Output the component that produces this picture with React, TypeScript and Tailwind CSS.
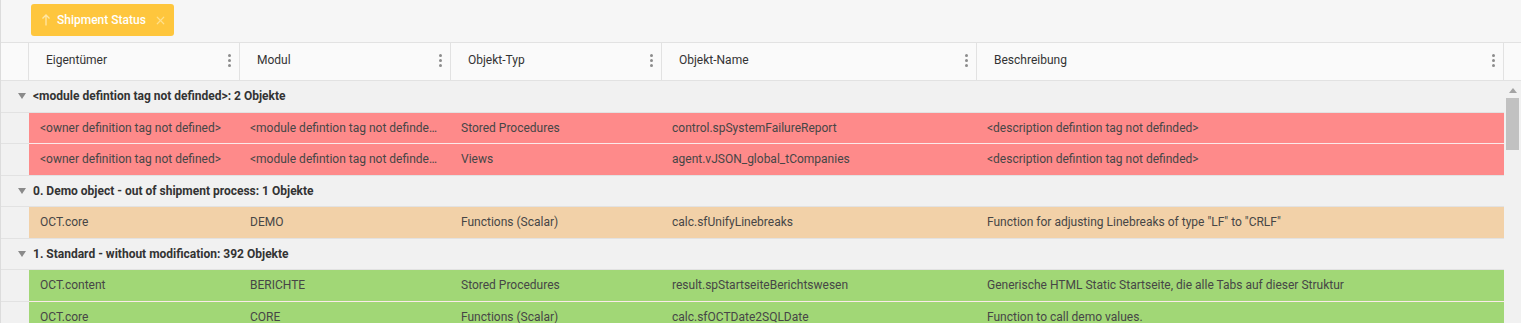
import { X } from "lucide-react"

type Row =
  | { kind: "group"; label: string }
  | { kind: "data"; color: string; cells: string[] }

const columns = [
  { title: "Eigentümer", w: "w-[211px]", dw: "w-[210px]" },
  { title: "Modul", w: "w-[211px]", dw: "w-[211px]" },
  { title: "Objekt-Typ", w: "w-[211px]", dw: "w-[211px]" },
  { title: "Objekt-Name", w: "w-[315px]", dw: "w-[315px]" },
  { title: "Beschreibung", w: "w-[527px]", dw: "w-[517px]" },
]

const rows: Row[] = [
  { kind: "group", label: "<module defintion tag not definded>: 2 Objekte" },
  {
    kind: "data",
    color: "bg-[#fe8a8a]",
    cells: [
      "<owner definition tag not defined>",
      "<module defintion tag not definded>",
      "Stored Procedures",
      "control.spSystemFailureReport",
      "<description defintion tag not definded>",
    ],
  },
  {
    kind: "data",
    color: "bg-[#fe8a8a]",
    cells: [
      "<owner definition tag not defined>",
      "<module defintion tag not definded>",
      "Views",
      "agent.vJSON_global_tCompanies",
      "<description defintion tag not definded>",
    ],
  },
  { kind: "group", label: "0. Demo object - out of shipment process: 1 Objekte" },
  {
    kind: "data",
    color: "bg-[#f2d1a8]",
    cells: [
      "OCT.core",
      "DEMO",
      "Functions (Scalar)",
      "calc.sfUnifyLinebreaks",
      'Function for adjusting Linebreaks of type "LF" to "CRLF"',
    ],
  },
  { kind: "group", label: "1. Standard - without modification: 392 Objekte" },
  {
    kind: "data",
    color: "bg-[#a1d776]",
    cells: [
      "OCT.content",
      "BERICHTE",
      "Stored Procedures",
      "result.spStartseiteBerichtswesen",
      "Generische HTML Static Startseite, die alle Tabs auf dieser Struktur",
    ],
  },
  {
    kind: "data",
    color: "bg-[#a1d776]",
    cells: ["OCT.core", "CORE", "Functions (Scalar)", "calc.sfOCTDate2SQLDate", "Function to call demo values."],
  },
]

function Kebab() {
  return (
    <div className="flex flex-col gap-[2px]">
      <span className="block h-[3px] w-[3px] rounded-full bg-[#8c8c8c]" />
      <span className="block h-[3px] w-[3px] rounded-full bg-[#8c8c8c]" />
      <span className="block h-[3px] w-[3px] rounded-full bg-[#8c8c8c]" />
    </div>
  )
}

function Caret() {
  return (
    <svg width="8" height="6" viewBox="0 0 8 6" className="shrink-0">
      <path d="M0 0 L8 0 L4 6 Z" fill="#8a8a8a" />
    </svg>
  )
}

export default function App() {
  return (
    <div className="h-[323px] w-[1521px] overflow-hidden border-l border-[#dcdcdc] bg-[#f1f1f1] font-['Roboto',sans-serif] text-[12px]">
      {/* group-by bar */}
      <div className="h-[42px] bg-[#f6f6f6] pl-[30px] pt-[4px]">
        <div className="flex h-[32px] w-[143px] items-center rounded-[3px] bg-[#fec63d] pl-[10px] text-white">
          <svg width="10" height="12" viewBox="0 0 10 12" className="shrink-0">
            <path d="M5 11.5 V1 M1.5 4.5 L5 1 L8.5 4.5" stroke="#ffe7a6" strokeWidth="1.3" fill="none" />
          </svg>
          <span className="ml-[6px] font-medium">Shipment Status</span>
          <X size={13} strokeWidth={2.2} className="ml-[8px] text-[#ffe08c]" />
        </div>
      </div>

      {/* header */}
      <div className="flex h-[39px] border-y border-[#e2e2e2] bg-[#fafafa] text-[#333]">
        <div className="w-[28px] shrink-0 border-r border-[#e2e2e2]" />
        {columns.map((c) => (
          <div
            key={c.title}
            className={`${c.w} flex shrink-0 items-center justify-between border-r border-[#e2e2e2] pb-[3px] pl-[17px] pr-[8px]`}
          >
            <span>{c.title}</span>
            <Kebab />
          </div>
        ))}
        <div className="flex-1" />
      </div>

      {/* body */}
      <div className="flex">
        <div className="w-[1503px] shrink-0">
          {rows.map((r, i) => {
            const next = rows[i + 1]
            if (r.kind === "group") {
              return (
                <div
                  key={i}
                  className="flex h-[31.5px] items-center gap-[7px] border-b border-[#e2e2e2] pl-[17px] font-bold text-[#333]"
                >
                  <Caret />
                  <span>{r.label}</span>
                </div>
              )
            }
            const sameNext = next && next.kind === "data"
            return (
              <div key={i} className="flex h-[31.5px]">
                <div className="w-[28px] shrink-0 border-b border-[#e2e2e2]" />
                <div
                  className={`flex flex-1 items-center border-b ${r.color} ${
                    sameNext ? "border-[#fbeaea]" : "border-[#e2e2e2]"
                  } text-[#464646]`}
                >
                  {r.cells.map((cell, j) => (
                    <div key={j} className={`${columns[j].dw} shrink-0 truncate pl-[11px] pr-[12px]`}>
                      {cell}
                    </div>
                  ))}
                </div>
              </div>
            )
          })}
        </div>

        {/* scrollbar */}
        <div className="flex w-[17px] flex-col items-center pt-[7px]">
          <svg width="8" height="5" viewBox="0 0 8 5">
            <path d="M0 5 L4 0 L8 5 Z" fill="#a3a3a3" />
          </svg>
          <div className="mt-[5px] h-[52px] w-[13px] bg-[#c1c1c1]" />
        </div>
      </div>
    </div>
  )
}
